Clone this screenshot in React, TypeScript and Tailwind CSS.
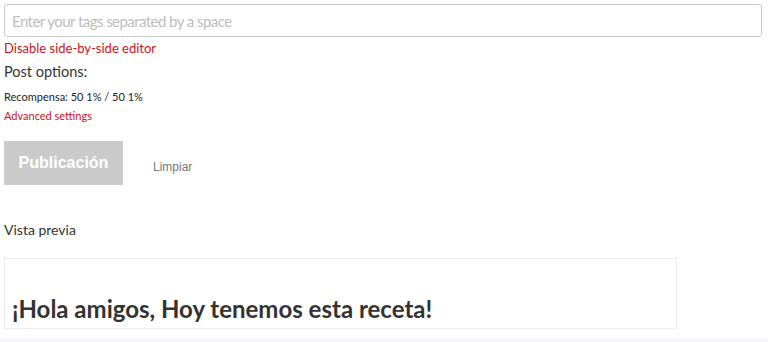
export default function App() {
  return (
    <div className="h-[342px] w-[768px] overflow-hidden bg-white font-['Lato',sans-serif]">
      <div className="h-[338px] pl-[4px] pt-[4px]">
        <input
          type="text"
          placeholder="Enter your tags separated by a space"
          className="block h-[33px] w-[758px] rounded-[3px] border border-[#cacaca] px-[7px] text-[15px] tracking-[-0.55px] text-[#333] placeholder:text-[#bdbdbd] outline-none"
        />
        <div className="mt-[3px] text-[13px] leading-[16px] text-[#c8141c]">
          Disable side-by-side editor
        </div>
        <div className="mt-[6px] text-[14.5px] leading-[20px] text-[#333]">Post options:</div>
        <div className="mt-[7px] text-[11px] leading-[16px] text-[#222]">
          Recompensa: 50 1% / 50 1%
        </div>
        <div className="mt-[3px] text-[11px] leading-[16px] text-[#c8141c]">Advanced settings</div>
        <div className="mt-[17px] flex items-center">
          <button className="h-[44px] w-[119px] bg-[#cacaca] font-['Liberation_Sans',sans-serif] text-[16px] font-bold text-white">
            Publicación
          </button>
          <span className="ml-[30px] mt-[8px] font-['Liberation_Sans',sans-serif] text-[12px] text-[#777]">
            Limpiar
          </span>
        </div>
        <div className="mt-[36px] text-[14px] leading-[18px] text-[#333]">Vista previa</div>
        <div className="mt-[19px] h-[71px] w-[673px] border border-[#ececec] px-[7px] pt-[35px]">
          <h1 className="text-[24px] font-bold leading-[30px] text-[#333]">
            ¡Hola amigos, Hoy tenemos esta receta!
          </h1>
        </div>
      </div>
      <div className="h-[4px] bg-[#f6f6fa]" />
    </div>
  );
}
